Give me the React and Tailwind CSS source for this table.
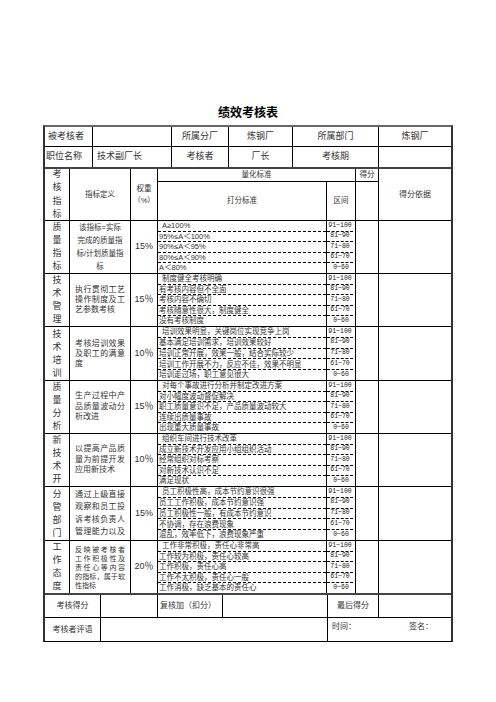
import React from 'react';

const ranges = ['91~100', '81~90', '71~80', '61~70', '0~60'];

const blocks = [
  {
    name: ['质', '量', '指', '标'],
    def: ['该指标=实际', '完成的质量指', '标/计划质量指', '标'],
    center: true,
    defCls: 'text-[7.5px] leading-[13px]',
    weight: '15%',
    h: 'h-[53px]',
    rows: ['A≥100%', '95%≤A＜100%', '90%≤A＜95%', '80%≤A＜90%', 'A＜80%'],
  },
  {
    name: ['技', '术', '管', '理'],
    def: ['执行贯彻工艺', '操作制度及工', '艺参数考核'],
    defCls: 'text-[8px] leading-[10px]',
    weight: '15％',
    h: 'h-[53px]',
    rows: ['制度健全考核明确', '有考核内容但不全面', '考核内容不确切', '考核随意性很大，制度健全', '没有考核制度'],
  },
  {
    name: ['技', '术', '培', '训'],
    def: ['考核培训效果', '及职工的满意', '度'],
    defCls: 'text-[8px] leading-[10px]',
    weight: '10％',
    h: 'h-[54px]',
    rows: [
      '培训效果明显，关键岗位实现竞争上岗',
      '基本满足培训需求，培训效果较好',
      '培训正常开展，效果一般，结合实际较少',
      '培训工作开展不力，反应不佳，效果不明显',
      '培训走过场，职工意见很大',
    ],
  },
  {
    name: ['质', '量', '分', '析'],
    def: ['生产过程中产', '品质量波动分', '析改进'],
    defCls: 'text-[8px] leading-[10.5px]',
    weight: '15％',
    h: 'h-[53px]',
    rows: [
      '对每个事故进行分析并制定改进方案',
      '对小幅度波动督促解决',
      '职工质量意识不足，产品质量波动较大',
      '连续出质量事故',
      '出现重大质量事故',
    ],
  },
  {
    name: ['新', '技', '术', '开'],
    def: ['以提高产品质', '量为前提开发', '应用新技术'],
    defCls: 'text-[8px] leading-[10.5px]',
    weight: '10％',
    h: 'h-[53px]',
    rows: ['组织车间进行技术改革', '成立新技术开发应用小组组织活动', '经常组织对标考察', '对新技术认识不足', '满足现状'],
  },
  {
    name: ['分', '管', '部', '门'],
    def: ['通过上级直接', '观察和员工投', '诉考核负责人', '管理能力以及'],
    defCls: 'text-[8px] leading-[12.5px]',
    weight: '15%',
    h: 'h-[54px]',
    justifyAll: true,
    rows: [
      '员工积极性高，成本节约意识很强',
      '员工工作积极，成本节约意识强',
      '员工积极性一般，有成本节约意识',
      '不协调，存在浪费现象',
      '混乱，效率低下，浪费现象严重',
    ],
  },
  {
    name: ['工', '作', '态', '度'],
    def: ['反映被考核者', '工作积极性及', '责任心等内容', '的指标，属于软', '性指标'],
    defCls: 'text-[7px] leading-[9px]',
    weight: '20％',
    h: 'h-[54px]',
    rows: [
      '工作非常积极，责任心非常高',
      '工作较为积极，责任心较高',
      '工作积极，责任心高',
      '工作不太积极，责任心一般',
      '工作消极，缺乏基本的责任心',
    ],
  },
];

function Block({ b, last }) {
  return (
    <div
      className={`flex ${b.h} ${last ? 'border-b-2 border-b-[#444]' : 'border-b border-b-black'}`}
    >
      <div className="w-[25px] shrink-0 border-r border-black flex flex-col items-center justify-center text-[9px] leading-[13px] text-[#333]">
        {b.name.map((c, i) => (
          <span key={i}>{c}</span>
        ))}
      </div>
      <div
        className={`w-[61px] shrink-0 border-r border-black flex flex-col justify-center pl-[5px] pr-[5px] text-[#333] ${b.defCls}`}
      >
        {b.def.map((l, i) => (
          <div
            key={i}
            className={
              b.center
                ? 'text-center whitespace-nowrap'
                : i < b.def.length - 1 || b.justifyAll
                ? 'whitespace-nowrap text-justify [text-align-last:justify]'
                : 'whitespace-nowrap'
            }
          >
            {l}
          </div>
        ))}
      </div>
      <div className="w-[27px] shrink-0 border-r border-black flex items-center justify-center text-[9px] text-[#333]">
        {b.weight}
      </div>
      <div className="w-[169px] shrink-0 border-r border-black flex flex-col">
        {b.rows.map((r, i) => (
          <div
            key={i}
            className={`flex-1 flex items-center text-[7.5px] leading-none whitespace-nowrap overflow-hidden text-[#333] ${
              i === 0 ? 'pl-[4px]' : 'pl-[1px]'
            } ${i < 4 ? 'border-b border-dashed border-black' : ''}`}
          >
            {r}
          </div>
        ))}
      </div>
      <div className="w-[29px] shrink-0 border-r border-black flex flex-col">
        {ranges.map((r, i) => (
          <div
            key={i}
            className={`flex-1 flex items-center justify-center text-[6.5px] leading-none text-[#222] [font-family:'Liberation_Mono',monospace] ${
              i < 4 ? 'border-b border-dashed border-black mr-[2px]' : ''
            }`}
          >
            {r}
          </div>
        ))}
      </div>
      <div className="w-[23px] shrink-0 border-r border-black" />
      <div className="flex-1" />
    </div>
  );
}

export default function App() {
  return (
    <div className="w-[496px] h-[702px] bg-white pt-[106px] [font-family:'Liberation_Sans','Noto_Sans_CJK_SC',sans-serif]">
      <div className="text-center text-[12px] leading-[14px] font-bold text-black mb-[5px]">绩效考核表</div>

      <div className="mx-auto w-[410px] border-t-2 border-x-2 border-b border-t-[#666] border-x-[#333] border-b-black text-[#333]">
        {/* top row 1 */}
        <div className="flex h-[20px] border-b border-black text-[9px]">
          <div className="w-[48px] shrink-0 border-r border-black flex items-center pl-[3px]">被考核者</div>
          <div className="w-[79px] shrink-0 border-r border-black" />
          <div className="w-[57px] shrink-0 border-r border-black flex items-center justify-center">所属分厂</div>
          <div className="w-[64px] shrink-0 border-r border-black flex items-center justify-center">炼钢厂</div>
          <div className="w-[86px] shrink-0 border-r border-black flex items-center justify-center">所属部门</div>
          <div className="flex-1 flex items-center justify-center">炼钢厂</div>
        </div>
        {/* top row 2 */}
        <div className="flex h-[22px] border-b-2 border-b-[#444] text-[9px]">
          <div className="w-[48px] shrink-0 border-r border-black flex items-center pl-[1px]">职位名称</div>
          <div className="w-[79px] shrink-0 border-r border-black flex items-center pl-[4px]">技术副厂长</div>
          <div className="w-[57px] shrink-0 border-r border-black flex items-center justify-center">考核者</div>
          <div className="w-[64px] shrink-0 border-r border-black flex items-center justify-center">厂长</div>
          <div className="w-[86px] shrink-0 border-r border-black flex items-center justify-center">考核期</div>
          <div className="flex-1" />
        </div>

        {/* header */}
        <div className="grid grid-cols-[25px_61px_27px_169px_29px_23px_72px] grid-rows-[13px_39px] text-[7.5px]">
          <div className="row-span-2 border-r border-b border-black flex flex-col items-center justify-center text-[9px] leading-[13.5px]">
            <span>考</span>
            <span>核</span>
            <span>指</span>
            <span>标</span>
          </div>
          <div className="row-span-2 border-r border-b border-black flex items-center justify-center">指标定义</div>
          <div className="row-span-2 border-r border-b border-black flex flex-col items-center justify-center leading-[12px]">
            <span>权重</span>
            <span>（%）</span>
          </div>
          <div className="col-span-2 border-r border-b border-black flex items-center justify-center">量化标准</div>
          <div className="border-r border-b border-black flex items-center justify-center">得分</div>
          <div className="row-span-2 border-b border-black flex items-center justify-center text-[8px]">得分依据</div>
          <div className="border-r border-b border-black flex items-center justify-center">打分标准</div>
          <div className="border-r border-b border-black flex items-center justify-center">区间</div>
          <div className="border-r border-b border-black" />
        </div>

        {blocks.map((b, i) => (
          <Block key={i} b={b} last={i === blocks.length - 1} />
        ))}

        {/* footer */}
        <div className="flex h-[23px] border-b border-black text-[8px]">
          <div className="w-[56px] shrink-0 border-r border-black flex items-center justify-center">考核得分</div>
          <div className="w-[57px] shrink-0 border-r border-black" />
          <div className="w-[65px] shrink-0 border-r border-black flex items-center pl-[2px]">复核加（扣分）</div>
          <div className="w-[105px] shrink-0 border-r border-black" />
          <div className="w-[51px] shrink-0 border-r border-black flex items-center justify-center">最后得分</div>
          <div className="flex-1" />
        </div>
        <div className="flex h-[23px] text-[8px]">
          <div className="w-[56px] shrink-0 border-r border-black flex items-center justify-center">考核者评语</div>
          <div className="w-[227px] shrink-0 border-r border-black" />
          <div className="flex-1 flex items-start pt-[3px] pl-[4px]">
            <span className="w-[77px]">时间：</span>
            <span>签名：</span>
          </div>
        </div>
      </div>
    </div>
  );
}
